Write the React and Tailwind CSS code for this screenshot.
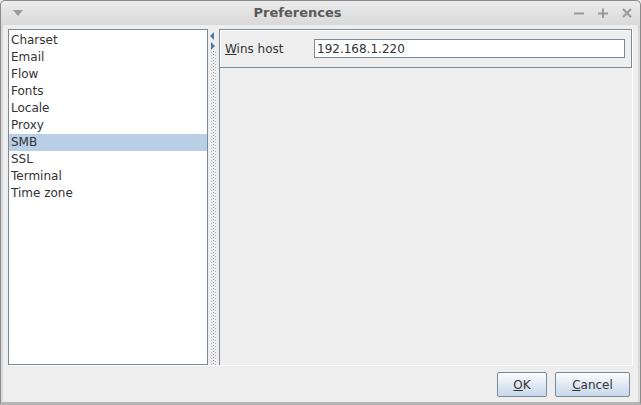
import { useState } from 'react';

const items = ['Charset', 'Email', 'Flow', 'Fonts', 'Locale', 'Proxy', 'SMB', 'SSL', 'Terminal', 'Time zone'];

function Splitter() {
  return (
    <div className="relative w-[11px] h-full bg-[#eeeeee]">
      <svg width="11" height="337" className="absolute left-0 top-0">
        <defs>
          <pattern id="dots" width="4" height="3" patternUnits="userSpaceOnUse">
            <rect x="1" y="1" width="1" height="1" fill="#8c8c8c" />
            <rect x="3" y="2" width="1" height="1" fill="#b0b0b0" />
          </pattern>
        </defs>
        <rect x="3" y="22" width="6" height="315" fill="url(#dots)" />
        <path d="M6 3 L2 7 L6 11 Z" fill="#4f7aa8" />
        <path d="M3 13 L7 17 L3 21 Z" fill="#4f7aa8" />
      </svg>
    </div>
  );
}

export default function App() {
  const [selected, setSelected] = useState('SMB');
  const [host, setHost] = useState('192.168.1.220');

  return (
    <div className="w-[641px] h-[405px] bg-[#eeeeee] flex flex-col overflow-hidden" style={{ fontFamily: '"DejaVu Sans", sans-serif' }}>
      <div className="h-[25px] shrink-0 rounded-t-[5px] border-t border-x border-[#8a8a8a] bg-gradient-to-b from-[#ececec] to-[#d9d9d9] flex items-center relative">
        <svg width="10" height="8" className="absolute left-[12px] top-[9px]">
          <path d="M0 0 L10 0 L5 6 Z" fill="#9a9a9a" />
        </svg>
        <div className="flex-1 text-center text-[13px] font-bold text-[#5a5a5a] pr-[46px]">Preferences</div>
        <div className="absolute right-[8px] top-[7px] flex items-center gap-[14px]">
          <svg width="10" height="10"><path d="M0 5.5 H10" stroke="#9a9a9a" strokeWidth="2" /></svg>
          <svg width="10" height="10"><path d="M0 5.5 H10 M5 0.5 V10.5" stroke="#9a9a9a" strokeWidth="2" /></svg>
          <svg width="10" height="10"><path d="M1 1 L9 9 M9 1 L1 9" stroke="#9a9a9a" strokeWidth="2.2" /></svg>
        </div>
      </div>
      <div className="flex-1 flex flex-col border-x border-b-[3px] border-x-[#8a8a8a] border-b-[#b4b4b4] shadow-[inset_2px_0_0_#d8d8d8,inset_-2px_0_0_#d8d8d8]">
        <div className="h-[337px] mt-[4px] ml-[7px] mr-[7px] flex border-r border-b border-white">
          <div className="w-[200px] h-full bg-white border border-[#7a8a99] text-[12px] text-[#333333] pt-[2px]">
            {items.map((it) => (
              <div
                key={it}
                onClick={() => setSelected(it)}
                className={`h-[17px] leading-[17px] pl-[2px] ${selected === it ? 'bg-[#b8cfe5]' : ''}`}
              >
                {it}
              </div>
            ))}
          </div>
          <Splitter />
          <div className="flex-1 h-full border-l border-t border-[#7a8a99]">
            <div className="h-[38px] border-r border-b border-[#7a8a99] flex items-center shadow-[inset_1px_1px_0_#ffffff]">
              <span className="w-[90px] pl-[5px] text-[12px] text-[#333333]"><span className="underline">W</span>ins host</span>
              <input
                value={host}
                onChange={(e) => setHost(e.target.value)}
                className="ml-[4px] w-[311px] h-[19px] border border-[#7a8a99] bg-white text-[12px] text-[#333333] px-[2px] outline-none"
              />
            </div>
          </div>
        </div>
        <div className="flex justify-end gap-[8px] pr-[10px] pt-[6px]">
          <button className="w-[50px] h-[25px] rounded-[2px] border border-[#7a8a99] bg-gradient-to-b from-[#fbfcfd] to-[#c7d8ea] text-[12px] text-[#333333]">
            <span className="underline">O</span>K
          </button>
          <button className="w-[75px] h-[25px] rounded-[2px] border border-[#7a8a99] bg-gradient-to-b from-[#fbfcfd] to-[#c7d8ea] text-[12px] text-[#333333]">
            <span className="underline">C</span>ancel
          </button>
        </div>
      </div>
    </div>
  );
}
